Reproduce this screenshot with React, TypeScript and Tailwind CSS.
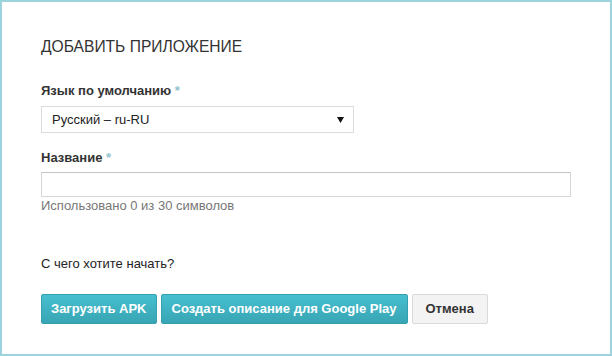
export default function App() {
  return (
    <div className="w-[612px] h-[356px] bg-white border-2 border-[#9cd3dc] font-['Liberation_Sans',Arial,sans-serif] text-[#222]">
      <div className="flex flex-col pl-[39px] pt-[35px]">
        <h1 className="text-[15.6px] leading-[20px] text-[#333] font-normal">ДОБАВИТЬ ПРИЛОЖЕНИЕ</h1>

        <label className="mt-[26px] text-[13px] leading-[16px] font-bold text-[#333]">
          Язык по умолчанию <span className="text-[#8fc3cc]">*</span>
        </label>
        <div className="mt-[7px] w-[313px] h-[27px] border border-[#dcdcdc] bg-white flex items-center justify-between pl-[10px] pr-[9px]">
          <span className="text-[13px] text-[#222]">Русский – ru-RU</span>
          <svg width="7" height="6" viewBox="0 0 7 6">
            <path d="M0 0h7L3.5 6z" fill="#111" />
          </svg>
        </div>

        <label className="mt-[17px] text-[13px] leading-[16px] font-bold text-[#333]">
          Название <span className="text-[#8fc3cc]">*</span>
        </label>
        <div className="mt-[6px] w-[530px] h-[25px] border border-[#d6d6d6] border-t-[#c4c4c4] bg-white" />
        <p className="mt-[1px] text-[13px] leading-[16px] text-[#777]">Использовано 0 из 30 символов</p>

        <p className="mt-[42px] text-[13px] leading-[16px] text-[#222]">С чего хотите начать?</p>

        <div className="mt-[22px] flex gap-[4px]">
          <button className="h-[30px] px-[9px] rounded-[2px] bg-gradient-to-b from-[#46bfcf] to-[#38a5b4] border border-[#35a0ae] text-white text-[13px] font-bold">
            Загрузить APK
          </button>
          <button className="h-[30px] px-[10px] rounded-[2px] bg-gradient-to-b from-[#46bfcf] to-[#38a5b4] border border-[#35a0ae] text-white text-[13px] font-bold">
            Создать описание для Google Play
          </button>
          <button className="h-[30px] px-[13px] rounded-[2px] bg-[#f3f3f3] border border-[#dadada] text-[#333] text-[13px] font-bold">
            Отмена
          </button>
        </div>
      </div>
    </div>
  );
}
